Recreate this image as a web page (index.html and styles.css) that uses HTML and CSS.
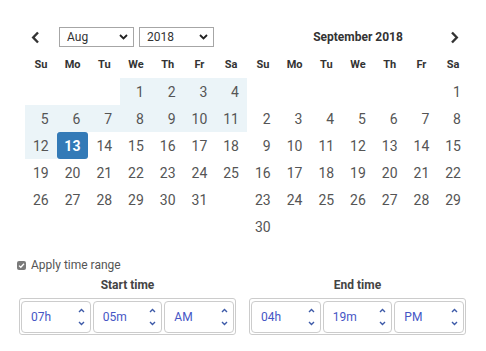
FILE: index.html
```html
<!DOCTYPE html>
<html>
<head>
<meta charset="utf-8">
<link rel="stylesheet" href="styles.css">
</head>
<body>
<div class="picker">
  <div class="calendars">
    <div class="cal">
      <div class="cal-head">
        <span class="nav prev"><svg width="9" height="13" viewBox="0 0 9 13"><path d="M7 1.5 L2.2 6.5 L7 11.5" fill="none" stroke="#333" stroke-width="2.4"/></svg></span>
        <div class="select month">Aug<svg class="chev" width="9" height="6" viewBox="0 0 9 6"><path d="M1 1 L4.5 4.5 L8 1" fill="none" stroke="#222" stroke-width="1.8"/></svg></div>
        <div class="select year">2018<svg class="chev" width="9" height="6" viewBox="0 0 9 6"><path d="M1 1 L4.5 4.5 L8 1" fill="none" stroke="#222" stroke-width="1.8"/></svg></div>
      </div>
      <div class="grid">
        <div class="wd">Su</div><div class="wd">Mo</div><div class="wd">Tu</div><div class="wd">We</div><div class="wd">Th</div><div class="wd">Fr</div><div class="wd">Sa</div>
        <div class="d"></div><div class="d"></div><div class="d"></div><div class="d in">1</div><div class="d in">2</div><div class="d in">3</div><div class="d in">4</div>
        <div class="d in">5</div><div class="d in">6</div><div class="d in">7</div><div class="d in">8</div><div class="d in">9</div><div class="d in">10</div><div class="d in">11</div>
        <div class="d in">12</div><div class="d sel">13</div><div class="d">14</div><div class="d">15</div><div class="d">16</div><div class="d">17</div><div class="d">18</div>
        <div class="d">19</div><div class="d">20</div><div class="d">21</div><div class="d">22</div><div class="d">23</div><div class="d">24</div><div class="d">25</div>
        <div class="d">26</div><div class="d">27</div><div class="d">28</div><div class="d">29</div><div class="d">30</div><div class="d">31</div><div class="d"></div>
      </div>
    </div>
    <div class="cal">
      <div class="cal-head right">
        <span class="spacer"></span>
        <div class="title">September 2018</div>
        <span class="nav next"><svg width="9" height="13" viewBox="0 0 9 13"><path d="M2 1.5 L6.8 6.5 L2 11.5" fill="none" stroke="#333" stroke-width="2.4"/></svg></span>
      </div>
      <div class="grid">
        <div class="wd">Su</div><div class="wd">Mo</div><div class="wd">Tu</div><div class="wd">We</div><div class="wd">Th</div><div class="wd">Fr</div><div class="wd">Sa</div>
        <div class="d"></div><div class="d"></div><div class="d"></div><div class="d"></div><div class="d"></div><div class="d"></div><div class="d">1</div>
        <div class="d">2</div><div class="d">3</div><div class="d">4</div><div class="d">5</div><div class="d">6</div><div class="d">7</div><div class="d">8</div>
        <div class="d">9</div><div class="d">10</div><div class="d">11</div><div class="d">12</div><div class="d">13</div><div class="d">14</div><div class="d">15</div>
        <div class="d">16</div><div class="d">17</div><div class="d">18</div><div class="d">19</div><div class="d">20</div><div class="d">21</div><div class="d">22</div>
        <div class="d">23</div><div class="d">24</div><div class="d">25</div><div class="d">26</div><div class="d">27</div><div class="d">28</div><div class="d">29</div>
        <div class="d">30</div>
      </div>
    </div>
  </div>
  <div class="time">
    <label class="apply"><span class="cb"><svg width="9" height="9" viewBox="0 0 9 9"><path d="M2 4.6 L3.8 6.3 L7 2.8" fill="none" stroke="#fff" stroke-width="1.3"/></svg></span>Apply time range</label>
    <div class="ranges">
      <div class="range">
        <div class="range-title">Start time</div>
        <div class="fields">
          <div class="field">07h<span class="spin"><svg width="7" height="18" viewBox="0 0 7 18"><path d="M1 4 L3.5 1.5 L6 4 M1 14 L3.5 16.5 L6 14" fill="none" stroke="#3d5aa8" stroke-width="1.4"/></svg></span></div>
          <div class="field">05m<span class="spin"><svg width="7" height="18" viewBox="0 0 7 18"><path d="M1 4 L3.5 1.5 L6 4 M1 14 L3.5 16.5 L6 14" fill="none" stroke="#3d5aa8" stroke-width="1.4"/></svg></span></div>
          <div class="field">AM<span class="spin"><svg width="7" height="18" viewBox="0 0 7 18"><path d="M1 4 L3.5 1.5 L6 4 M1 14 L3.5 16.5 L6 14" fill="none" stroke="#3d5aa8" stroke-width="1.4"/></svg></span></div>
        </div>
      </div>
      <div class="range">
        <div class="range-title">End time</div>
        <div class="fields">
          <div class="field">04h<span class="spin"><svg width="7" height="18" viewBox="0 0 7 18"><path d="M1 4 L3.5 1.5 L6 4 M1 14 L3.5 16.5 L6 14" fill="none" stroke="#3d5aa8" stroke-width="1.4"/></svg></span></div>
          <div class="field">19m<span class="spin"><svg width="7" height="18" viewBox="0 0 7 18"><path d="M1 4 L3.5 1.5 L6 4 M1 14 L3.5 16.5 L6 14" fill="none" stroke="#3d5aa8" stroke-width="1.4"/></svg></span></div>
          <div class="field">PM<span class="spin"><svg width="7" height="18" viewBox="0 0 7 18"><path d="M1 4 L3.5 1.5 L6 4 M1 14 L3.5 16.5 L6 14" fill="none" stroke="#3d5aa8" stroke-width="1.4"/></svg></span></div>
        </div>
      </div>
    </div>
  </div>
</div>
</body>
</html>
```

FILE: styles.css
```css
* { box-sizing: border-box; }
html, body { margin: 0; padding: 0; background: #fff; }
body { font-family: Roboto, "Noto Sans", sans-serif; color: #555; }

.picker { padding: 27px 0 0 17px; width: 486px; }
.calendars { display: flex; margin-left: 8px; }
.cal { width: 222px; }

.cal-head { display: flex; align-items: center; height: 20px; margin-bottom: 4px; }
.nav { width: 20px; height: 20px; display: flex; align-items: center; justify-content: center; }
.prev { margin-right: 14px; }
.select {
  display: flex; align-items: center; justify-content: space-between;
  width: 75px; height: 20px; border: 1px solid #a6a6a6;
  padding: 0 5px 0 7px; font-size: 12px; color: #333;
}
.month { margin-right: 5px; }
.chev { flex: none; }
.spacer { width: 25px; }
.title { flex: 1; text-align: center; font-size: 12px; font-weight: 700; color: #333; }
.next { margin-right: 5px; }

.grid { display: grid; grid-template-columns: repeat(7, 1fr); grid-auto-rows: 27px; }
.wd { display: flex; align-items: center; justify-content: center; font-size: 11px; font-weight: 700; color: #333; }
.d { display: flex; align-items: center; justify-content: flex-end; padding-right: 8px; font-size: 14px; color: #555; }
.d.in { background: #ebf4f8; }
.d.sel { background: #337ab7; color: #fff; font-weight: 700; border-radius: 3px; }

.time { margin-top: 17px; }
.apply { display: flex; align-items: center; height: 16px; font-size: 12px; color: #555; }
.cb { width: 9px; height: 9px; background: #7a7a7a; border-radius: 2px; margin-right: 5px; display: flex; }
.ranges { display: flex; gap: 13px; margin-left: 2px; margin-top: 4px; }
.range { width: 217px; }
.range-title { text-align: center; font-size: 12px; font-weight: 700; color: #444; line-height: 16px; margin-bottom: 5px; }
.fields { display: flex; gap: 2px; border: 1px solid #ccc; border-radius: 3px; padding: 2px 1px 1px; }
.field {
  flex: 1; height: 32px; border: 1px solid #ccc; border-radius: 4px;
  display: flex; align-items: center; justify-content: space-between;
  padding: 0 5px 0 9px; font-size: 12px; color: #4556c5;
}
.spin { display: flex; }
```
